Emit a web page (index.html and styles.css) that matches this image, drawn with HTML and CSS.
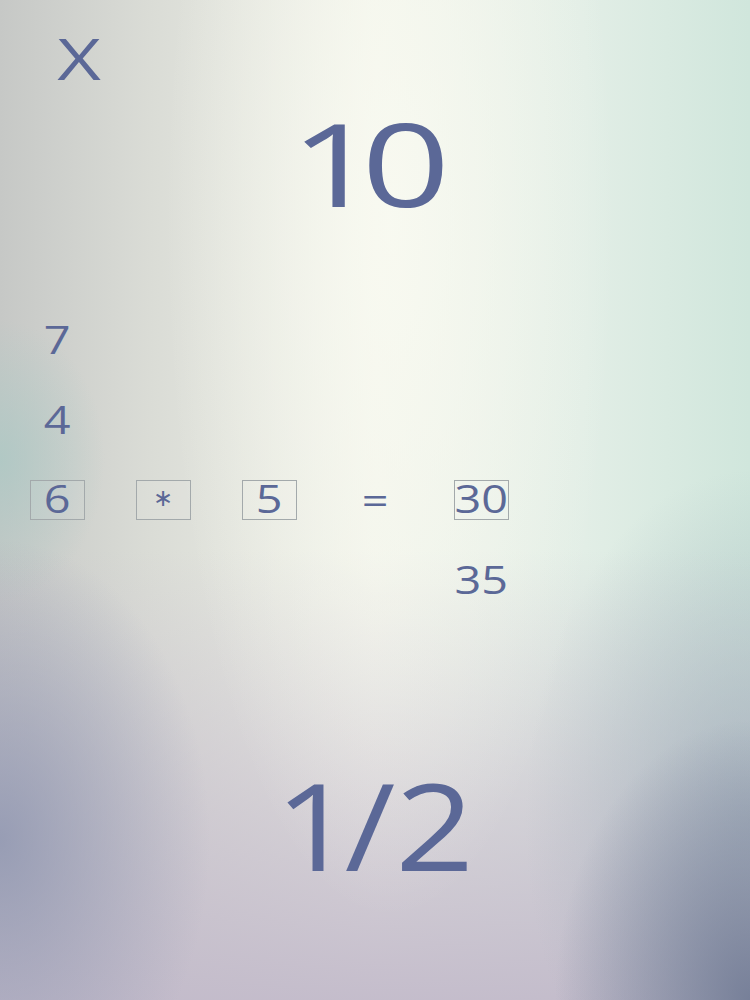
FILE: index.html
```html
<!DOCTYPE html>
<html>
<head>
<meta charset="utf-8">
<link rel="stylesheet" href="styles.css">
</head>
<body>
<div class="screen">
  <div class="close"><span class="glyph">X</span></div>
  <div class="score"><span class="glyph"><span class="one">1</span>0</span></div>
  <div class="board">
    <div class="cell"><span class="num">7</span></div>
    <div class="cell"></div><div class="cell"></div><div class="cell"></div><div class="cell"></div>
    <div class="cell"><span class="num">4</span></div>
    <div class="cell"></div><div class="cell"></div><div class="cell"></div><div class="cell"></div>
    <div class="cell"><div class="box"><span class="num">6</span></div></div>
    <div class="cell"><div class="box"><span class="num op">∗</span></div></div>
    <div class="cell"><div class="box"><span class="num">5</span></div></div>
    <div class="cell"><span class="num">=</span></div>
    <div class="cell"><div class="box"><span class="num">30</span></div></div>
    <div class="cell"></div><div class="cell"></div><div class="cell"></div><div class="cell"></div>
    <div class="cell"><span class="num">35</span></div>
  </div>
  <div class="progress"><span class="glyph"><span class="one">1</span>/2</span></div>
</div>
</body>
</html>
```

FILE: styles.css
```css
html, body {
  margin: 0;
  padding: 0;
}

.screen {
  width: 750px;
  height: 1000px;
  overflow: hidden;
  font-family: "Open Sans", "Noto Sans", sans-serif;
  color: #5b6897;
  background:
    radial-gradient(ellipse 26% 28% at 100% 100%, rgba(112,122,148,0.9), rgba(112,122,148,0) 100%),
    radial-gradient(ellipse 30% 35% at 100% 82%, rgba(150,165,180,0.6), rgba(150,165,180,0) 100%),
    radial-gradient(ellipse 28% 30% at 0% 84%, rgba(140,148,175,0.8), rgba(140,148,175,0) 100%),
    radial-gradient(ellipse 14% 14% at 0% 46%, rgba(170,200,196,0.75), rgba(170,200,196,0) 100%),
    radial-gradient(ellipse 30% 70% at 52% 22%, rgba(250,251,242,0.8), rgba(250,251,242,0) 100%),
    linear-gradient(180deg, rgba(198,190,204,0) 55%, rgba(198,190,204,0.6) 80%, rgba(194,186,202,0.95) 100%),
    linear-gradient(90deg, #c6c8c6 0%, #dadcd6 20%, #f1f3ea 50%, #e2eee6 78%, #d0e6dc 100%);
}

.glyph {
  display: inline-block;
  transform: scaleX(1.35);
}

.close {
  padding-top: 30px;
  padding-left: 63px;
  font-size: 56px;
  line-height: 56px;
  height: 56px;
}

.score {
  margin-top: 19px;
  padding-right: 10px;
  text-align: center;
  font-size: 115px;
  line-height: 115px;
  height: 115px;
}

.score .one {
  letter-spacing: -13px;
}

.board {
  margin-top: 79px;
  padding-left: 4px;
  display: grid;
  grid-template-columns: repeat(5, 106px);
  grid-auto-rows: 80px;
}

.cell {
  display: flex;
  justify-content: center;
  align-items: center;
  font-size: 39px;
  line-height: 80px;
}

.num {
  display: inline-block;
  transform: scaleX(1.2);
}

.box {
  box-sizing: border-box;
  width: 55px;
  height: 40px;
  margin-top: 2px;
  border: 1px solid #a3a9ab;
  background: rgba(255, 255, 255, 0.06);
  display: flex;
  justify-content: center;
  align-items: flex-start;
  line-height: 34px;
}

.op {
  font-family: "DejaVu Sans", sans-serif;
  font-size: 24px;
  transform: none;
}

.progress {
  margin-top: 146px;
  text-align: center;
  font-size: 120px;
  line-height: 120px;
  height: 120px;
}

.progress .glyph {
  transform: scaleX(1.15);
}

.progress .one {
  letter-spacing: -8px;
}
```
